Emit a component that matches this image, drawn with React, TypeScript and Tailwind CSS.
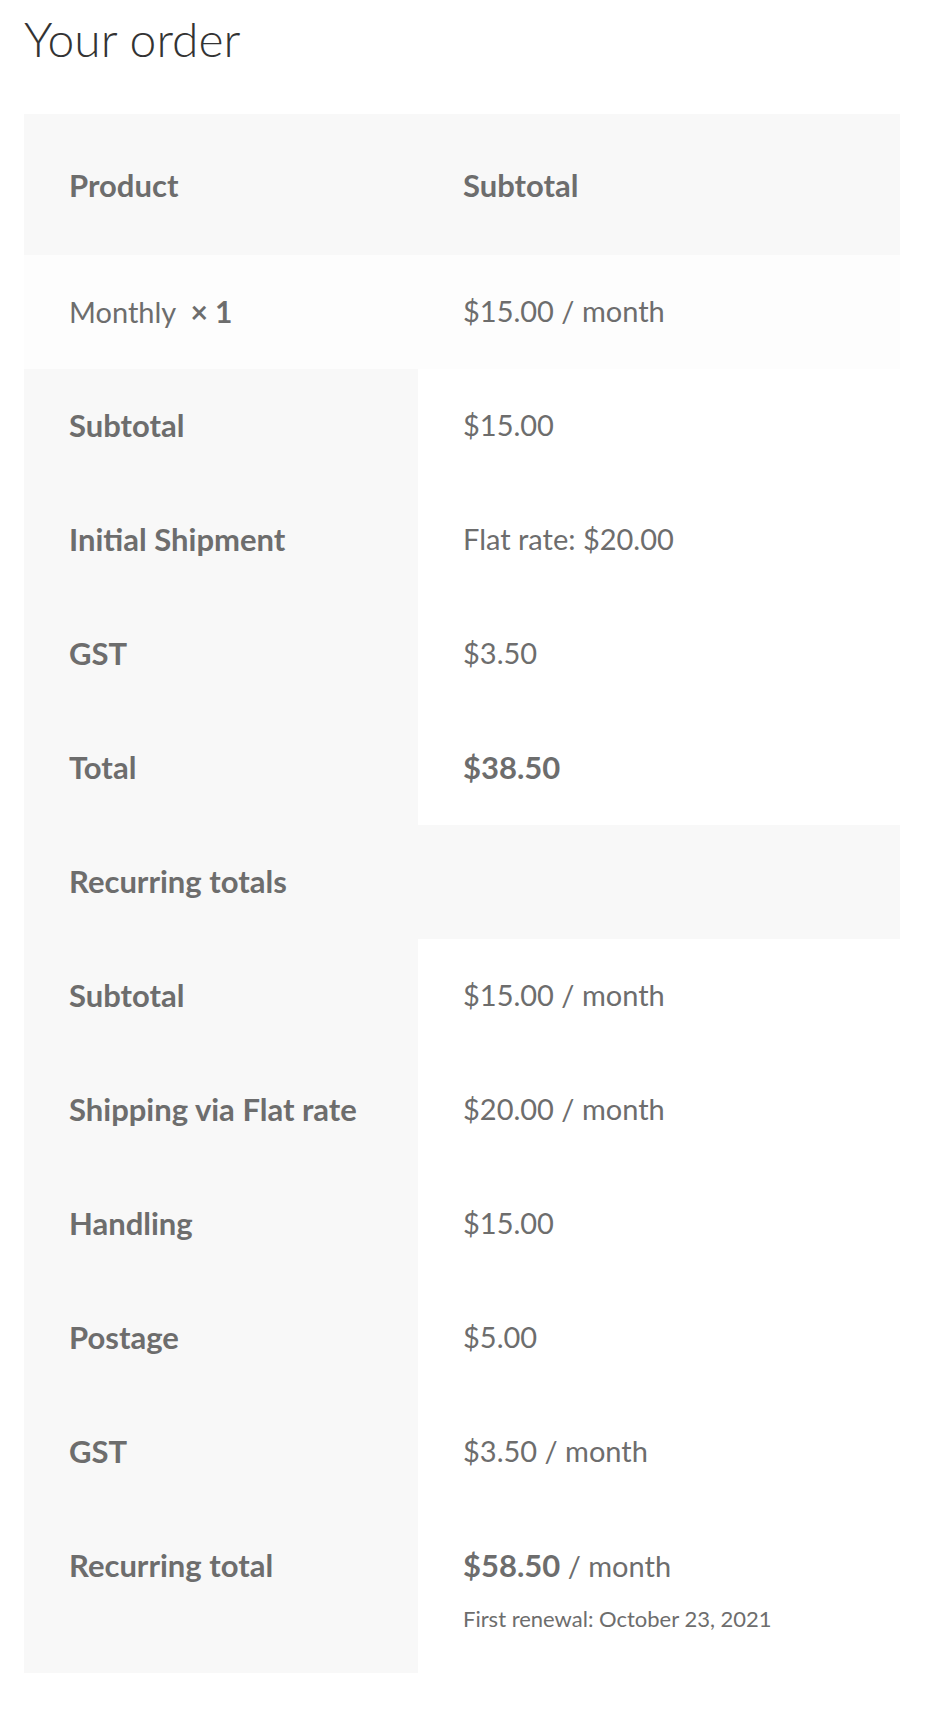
import React from "react";

const font = { fontFamily: '"Lato", "Liberation Sans", sans-serif' };

function LRow({ label, children }: { label: string; children: React.ReactNode }) {
  return (
    <div className="grid h-[114px] grid-cols-[394px_1fr] overflow-hidden">
      <div className="bg-[#f8f8f8] px-[45px] pt-[32px] text-[31px] font-bold leading-[48px]">{label}</div>
      <div className="bg-white px-[45px] pt-[32px] leading-[48px]">{children}</div>
    </div>
  );
}

export default function App() {
  return (
    <div className="min-h-[1718px] bg-white text-[#6d6d6d]" style={font}>
      <div className="ml-[24px] w-[876px] pt-[15px]">
        <h3 className="mb-[51px] h-[48px] text-[48px] font-light leading-none text-[#333333]">Your order</h3>
        <div className="text-[29px]">
          <div className="grid h-[141px] grid-cols-[394px_1fr] items-center bg-[#f8f8f8] text-[31px] font-bold leading-[48px]">
            <div className="px-[45px]">Product</div>
            <div className="px-[45px]">Subtotal</div>
          </div>
          <div className="grid h-[114px] grid-cols-[394px_1fr] bg-[#fdfdfd] leading-[48px]">
            <div className="px-[45px] pt-[32px]">
              Monthly&nbsp; <strong className="text-[30px] font-bold">×&nbsp;1</strong>
            </div>
            <div className="px-[45px] pt-[32px]">$15.00 / month</div>
          </div>
          <LRow label="Subtotal">$15.00</LRow>
          <LRow label="Initial Shipment">Flat rate: $20.00</LRow>
          <LRow label="GST">$3.50</LRow>
          <LRow label="Total">
            <strong className="text-[31px] font-bold">$38.50</strong>
          </LRow>
          <div className="h-[114px] bg-[#f8f8f8] px-[45px] pt-[32px] text-[31px] font-bold leading-[48px]">Recurring totals</div>
          <LRow label="Subtotal">$15.00 / month</LRow>
          <LRow label="Shipping via Flat rate">$20.00 / month</LRow>
          <LRow label="Handling">$15.00</LRow>
          <LRow label="Postage">$5.00</LRow>
          <LRow label="GST">$3.50 / month</LRow>
          <div className="grid h-[164px] grid-cols-[394px_1fr] overflow-hidden">
            <div className="bg-[#f8f8f8] px-[45px] pt-[32px] text-[31px] font-bold leading-[48px]">Recurring total</div>
            <div className="bg-white px-[45px] pt-[32px]">
              <div className="h-[48px] leading-[48px]">
                <strong className="text-[31px] font-bold">$58.50</strong> / month
              </div>
              <div className="mt-[15px] text-[22px] leading-[30px]">First renewal: October 23, 2021</div>
            </div>
          </div>
        </div>
      </div>
    </div>
  );
}
